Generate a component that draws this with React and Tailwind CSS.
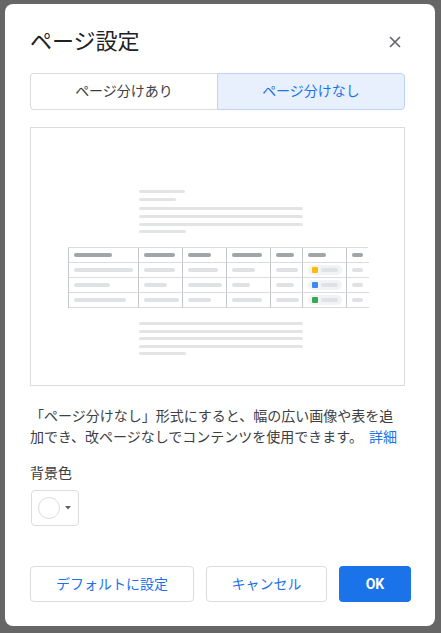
import React from 'react';

const FONT = "font-['Roboto','Noto_Sans_CJK_JP',sans-serif]";

const headerBars = [38, 31, 23, 30, 18, 18, 11];
const rows = [
    { bars: [59, 31, 30, 23, 22, null, 11], chip: 'bg-[#fbbc04]' },
    { bars: [36, 23, 34, 18, 18, null, 11], chip: 'bg-[#4285f4]' },
    { bars: [52, 35, 23, 30, 23, null, 11], chip: 'bg-[#34a853]' },
];

const Bar = ({ w, dark }) => (
    <div
        className={`h-[4px] rounded-full ${dark ? 'bg-[#a0a5a8]' : 'bg-[#dfe1e4]'}`}
        style={{ width: w }}
    />
);

const Line = ({ w, mt }) => (
    <div className="h-[3px] rounded-full bg-[#e3e4e6]" style={{ width: w, marginTop: mt }} />
);

const Cell = ({ children, last }) => (
    <div className={`h-[15px] flex items-center pl-[5px] border-b border-[#dadce0] ${last ? '' : 'border-r border-r-[#c4c7ca]'}`}>
        {children}
    </div>
);

const TablePreview = () => (
    <div className="ml-[37px] mt-[14px] w-[300px] grid grid-cols-[70px_44px_44px_44px_32px_44px_22px] border-l border-t border-[#c4c7ca] border-t-[#dadce0]">
        {headerBars.map((w, i) => (
            <Cell key={`h${i}`} last={i === 6}>
                <Bar w={w} dark />
            </Cell>
        ))}
        {rows.map((r, ri) =>
            r.bars.map((w, i) => (
                <Cell key={`${ri}-${i}`} last={i === 6}>
                    {w === null ? (
                        <div className="w-[34px] h-[10px] rounded-full bg-[#f1f3f4] flex items-center pl-[4px] gap-[3px]">
                            <div className={`w-[6px] h-[6px] rounded-[1px] ${r.chip}`} />
                            <Bar w={17} />
                        </div>
                    ) : (
                        <Bar w={w} />
                    )}
                </Cell>
            ))
        )}
    </div>
);

const App = () => {
    return (
        <div className={`w-[441px] h-[633px] bg-[#666666] pt-[4px] pl-[5px] overflow-hidden ${FONT}`}>
            <div className="w-[430px] h-[622px] bg-white rounded-[8px] pl-[25px] pr-[30px] pt-[24px] pb-[24px] flex flex-col">

                {/* Title */}
                <div className="h-[28px] flex items-center justify-between">
                    <h1 className="text-[22px] leading-[28px] text-[#202124] font-normal">ページ設定</h1>
                    <svg width="12" height="12" viewBox="0 0 12 12" className="mr-[4px]">
                        <path d="M1 1 L11 11 M11 1 L1 11" stroke="#5f6368" strokeWidth="1.6" />
                    </svg>
                </div>

                {/* Tabs */}
                <div className="mt-[17px] h-[37px] grid grid-cols-[187px_188px] text-[14px]">
                    <div className="flex items-center justify-center border border-[#dadce0] border-r-0 rounded-l-[4px] text-[#3c4043]">
                        ページ分けあり
                    </div>
                    <div className="flex items-center justify-center border border-[#bcd4fa] bg-[#e8f0fe] rounded-r-[4px] text-[#1a73e8]">
                        ページ分けなし
                    </div>
                </div>

                {/* Preview */}
                <div className="mt-[17px] h-[259px] border border-[#dadce0] pt-[62px]">
                    <div className="ml-[108px]">
                        <Line w={46} mt={0} />
                        <Line w={37} mt={5} />
                        <Line w={164} mt={6} />
                        <Line w={164} mt={5} />
                        <Line w={164} mt={5} />
                        <Line w={47} mt={4} />
                    </div>
                    <TablePreview />
                    <div className="ml-[108px] mt-[14px]">
                        <Line w={164} mt={0} />
                        <Line w={164} mt={5} />
                        <Line w={164} mt={4} />
                        <Line w={164} mt={5} />
                        <Line w={47} mt={4} />
                    </div>
                </div>

                {/* Description */}
                <p className="mt-[20px] text-[14px] leading-[21px] text-[#3c4043]">
                    「ページ分けなし」形式にすると、幅の広い画像や表を追加でき、改ページなしでコンテンツを使用できます。<span className="ml-[6px] text-[#1a73e8]">詳細</span>
                </p>

                {/* Background colour */}
                <div className="mt-[15px] text-[14px] leading-[20px] text-[#3c4043]">背景色</div>
                <button className="mt-[7px] ml-[1px] w-[48px] h-[36px] border border-[#dadce0] rounded-[4px] flex items-center pl-[6px] gap-[5px]">
                    <div className="w-[22px] h-[22px] rounded-full border border-[#dadce0] bg-white" />
                    <svg width="6" height="4" viewBox="0 0 6 4">
                        <path d="M0 0 L6 0 L3 3.5 Z" fill="#5f6368" />
                    </svg>
                </button>

                {/* Actions */}
                <div className="mt-auto mr-[-6px] flex gap-[12px] text-[14px]">
                    <button className="w-[164px] h-[36px] border border-[#dadce0] rounded-[4px] text-[#1a73e8]">
                        デフォルトに設定
                    </button>
                    <button className="w-[121px] h-[36px] border border-[#dadce0] rounded-[4px] text-[#1a73e8]">
                        キャンセル
                    </button>
                    <button className="w-[72px] h-[36px] rounded-[4px] bg-[#1a73e8] text-white font-bold">
                        OK
                    </button>
                </div>
            </div>
        </div>
    );
};

export default App;
